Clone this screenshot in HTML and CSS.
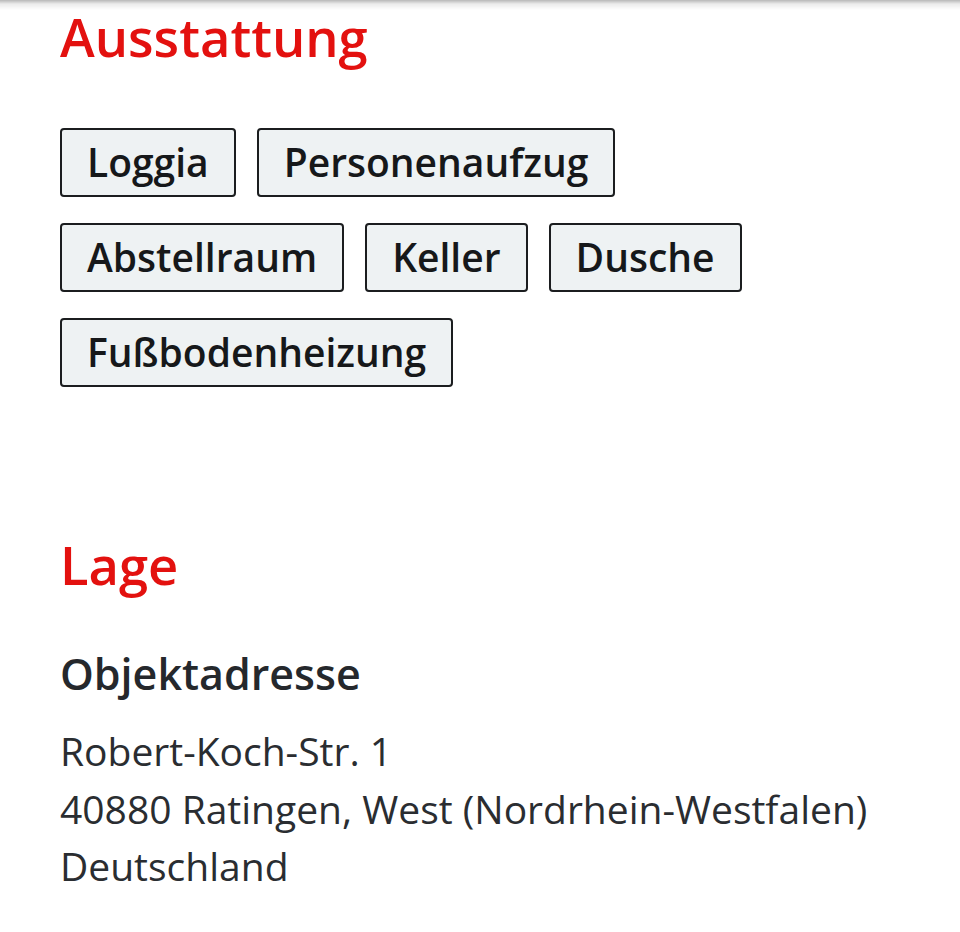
FILE: index.html
```html
<!DOCTYPE html>
<html lang="de">
<head>
<meta charset="utf-8">
<title>Ausstattung</title>
<link rel="stylesheet" href="styles.css">
</head>
<body>
<div class="top-shadow"></div>
<main class="content">
  <section class="section">
    <h2 class="section-title">Ausstattung</h2>
    <ul class="tags">
      <li class="tag">Loggia</li>
      <li class="tag">Personenaufzug</li>
      <li class="tag">Abstellraum</li>
      <li class="tag">Keller</li>
      <li class="tag">Dusche</li>
      <li class="tag">Fußbodenheizung</li>
    </ul>
  </section>
  <section class="section section-lage">
    <h2 class="section-title">Lage</h2>
    <h3 class="sub-title">Objektadresse</h3>
    <p class="address">Robert-Koch-Str. 1<br>40880 Ratingen, West (Nordrhein-Westfalen)<br>Deutschland</p>
  </section>
</main>
</body>
</html>
```

FILE: styles.css
```css
html, body {
  margin: 0;
  padding: 0;
  background: #ffffff;
}

body {
  font-family: "Open Sans", "Noto Sans", sans-serif;
  color: #25282c;
}

.top-shadow {
  position: fixed;
  top: 0;
  left: 0;
  right: 0;
  height: 10px;
  background: linear-gradient(to bottom, rgba(0,0,0,0.28), rgba(0,0,0,0.08) 40%, rgba(0,0,0,0));
  z-index: 10;
}

.content {
  padding: 0 60px;
}

.section-title {
  margin: 6px 0 0;
  font-size: 52.5px;
  line-height: 62px;
  font-weight: 600;
  color: #e3110f;
}

.tags {
  list-style: none;
  margin: 60px 0 0;
  padding: 0;
  display: flex;
  flex-wrap: wrap;
  gap: 26px 21px;
}

.tag {
  border: 2px solid #1b1d1f;
  border-radius: 4px;
  background: #eef2f3;
  padding: 9px 25px 11px;
  font-size: 39px;
  line-height: 45px;
  font-weight: 600;
  color: #16181a;
}

.section-lage {
  margin-top: 147px;
}

.section-lage .section-title {
  margin-top: 0;
}

.sub-title {
  margin: 54px 0 0;
  font-size: 43px;
  line-height: 48px;
  font-weight: 600;
  color: #25282c;
}

.address {
  margin: 24px 0 0;
  font-size: 39px;
  line-height: 57.5px;
  font-weight: 400;
  color: #2a2d31;
}
```
